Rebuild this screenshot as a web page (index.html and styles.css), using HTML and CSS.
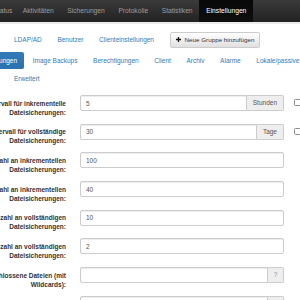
FILE: index.html
```html
<!DOCTYPE html>
<html lang="de">
<head>
<meta charset="utf-8">
<title>Einstellungen</title>
<link rel="stylesheet" href="styles.css">
</head>
<body>
<div class="navbar">
  <div class="nav-inner">
    <a class="nav-item first">Status</a>
    <a class="nav-item">Aktivitäten</a>
    <a class="nav-item">Sicherungen</a>
    <a class="nav-item">Protokolle</a>
    <a class="nav-item">Statistiken</a>
    <a class="nav-item active">Einstellungen</a>
  </div>
</div>

<div class="tabs-row row1">
  <a class="pill">LDAP/AD</a>
  <a class="pill">Benutzer</a>
  <a class="pill">Clienteinstellungen</a>
  <button class="btn" type="button"><svg class="plus" viewBox="0 0 10 10" width="5" height="5"><path d="M5 0V10M0 5H10" stroke="#111" stroke-width="2.6" fill="none"/></svg>Neue Gruppe hinzufügen</button>
</div>
<div class="tabs-row row2">
  <a class="pill active">Dateisicherungen</a>
  <a class="pill">Image Backups</a>
  <a class="pill">Berechtigungen</a>
  <a class="pill">Client</a>
  <a class="pill">Archiv</a>
  <a class="pill">Alarme</a>
  <a class="pill">Lokale/passive Clients</a>
</div>
<div class="tabs-row row3">
  <a class="pill">Erweitert</a>
</div>

<form class="form">
  <div class="form-row">
    <label class="label">Intervall für inkrementelle<br>Dateisicherungen:</label>
    <div class="control"><input class="input grouped" value="5"><span class="addon">Stunden</span></div>
    <span class="check"></span>
  </div>
  <div class="form-row">
    <label class="label">Intervall für vollständige<br>Dateisicherungen:</label>
    <div class="control"><input class="input grouped" value="30"><span class="addon">Tage</span></div>
    <span class="check"></span>
  </div>
  <div class="form-row">
    <label class="label">Maximale Anzahl an inkrementellen<br>Dateisicherungen:</label>
    <div class="control"><input class="input" value="100"></div>
  </div>
  <div class="form-row">
    <label class="label">Minimale Anzahl an inkrementellen<br>Dateisicherungen:</label>
    <div class="control"><input class="input" value="40"></div>
  </div>
  <div class="form-row">
    <label class="label">Maximale Anzahl an vollständigen<br>Dateisicherungen:</label>
    <div class="control"><input class="input" value="10"></div>
  </div>
  <div class="form-row">
    <label class="label">Minimale Anzahl an vollständigen<br>Dateisicherungen:</label>
    <div class="control"><input class="input" value="2"></div>
  </div>
  <div class="form-row">
    <label class="label">Ausgeschlossene Dateien (mit<br>Wildcards):</label>
    <div class="control"><input class="input grouped" value=""><span class="addon help">?</span></div>
  </div>
  <div class="form-row">
    <label class="label">Eingeschlossene Dateien (mit<br>Wildcards):</label>
    <div class="control"><input class="input grouped" value=""><span class="addon help">?</span></div>
  </div>
</form>
</body>
</html>
```
FILE: styles.css
```css
* { box-sizing: border-box; }
html, body {
  margin: 0;
  width: 300px;
  height: 300px;
  overflow: hidden;
}
body {
  font-family: "Liberation Sans", Arial, sans-serif;
  font-size: 6.5px;
  color: #333;
  background: #fff;
}

.navbar {
  height: 24px;
  background: linear-gradient(#3a3a3a, #222);
  border-bottom: 2px solid #ececec;
  font-size: 6.7px;
}
.nav-inner {
  display: flex;
  height: 22px;
  margin-left: -13.4px;
}
.nav-item {
  padding: 0 6.8px;
  line-height: 22px;
  color: #9d9d9d;
  white-space: nowrap;
}
.nav-item.first { padding-right: 3.6px; }
.nav-item.active {
  background: linear-gradient(#080808, #0f0f0f);
  color: #fff;
}

.tabs-row {
  display: flex;
  align-items: center;
  white-space: nowrap;
  height: 17px;
}
.row1 { margin-top: 7px; padding-left: 7px; }
.row2 { margin-top: 4px; margin-left: -40.5px; }
.row3 { margin-top: 1px; padding-left: 7px; }

.pill {
  padding: 0 7px;
  line-height: 17px;
  margin-right: 1.6px;
  color: #337ab7;
  border-radius: 2px;
  flex: none;
}
.pill.active {
  background: linear-gradient(#337ab7, #2a73b0);
  color: #fff;
}

.btn {
  margin-left: 7px;
  height: 16px;
  padding: 0 5px;
  border: 1px solid #ccc;
  border-radius: 2px;
  background: linear-gradient(#fff, #e0e0e0);
  font: inherit;
  font-size: 6.25px;
  color: #333;
  display: flex;
  align-items: center;
  gap: 4px;
  flex: none;
}
.plus { display: block; }

.form { margin-top: 8px; margin-left: -134px; }
.form-row {
  display: flex;
  align-items: flex-start;
  margin-bottom: 7.2px;
}
.label {
  width: 200px;
  flex: none;
  text-align: right;
  font-weight: bold;
  padding-top: 3.5px;
  line-height: 9px;
  margin-right: 14px;
  white-space: nowrap;
}
.control {
  width: 204px;
  flex: none;
  display: flex;
  height: 16px;
}
.input {
  flex: 1;
  min-width: 0;
  height: 16px;
  border: 1px solid #ccc;
  border-radius: 2px;
  padding: 0 5px;
  font: inherit;
  color: #555;
  background: #fff;
  box-shadow: inset 0 1px 1px rgba(0, 0, 0, .075);
  outline: none;
}
.input.grouped { border-radius: 2px 0 0 2px; }
.addon {
  flex: none;
  background: #eee;
  border: 1px solid #ccc;
  border-left: 0;
  border-radius: 0 2px 2px 0;
  padding: 0 6px;
  line-height: 14px;
  color: #555;
}
.addon.help {
  width: 16px;
  padding: 0;
  text-align: center;
  color: #7a8ea5;
}
.check {
  flex: none;
  width: 7px;
  height: 7px;
  margin-left: 10px;
  margin-top: 4px;
  border: 1px solid #8a8a8a;
  border-radius: 1.5px;
  background: #fff;
}
```
